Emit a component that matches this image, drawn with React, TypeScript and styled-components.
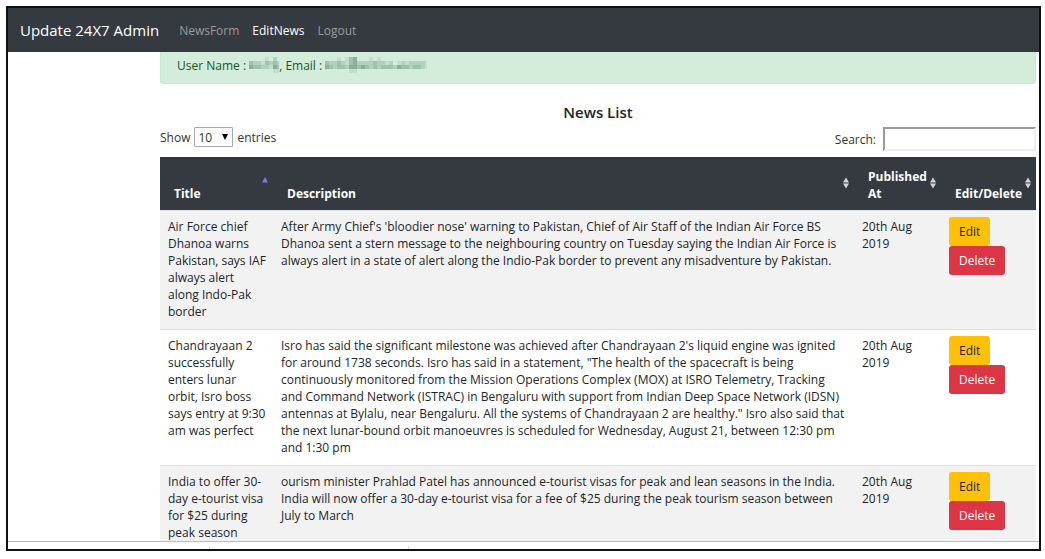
import React from 'react';
import styled, { createGlobalStyle, css } from 'styled-components';

const Global = createGlobalStyle`
  * { box-sizing: border-box; }
  body { margin: 0; background: #fff; color: #212529; font: 12px/17px "Open Sans", "Noto Sans", sans-serif; }
`;

const Frame = styled.div`
  display: flex; flex-direction: column;
  height: calc(100vh - 14px);
  margin: 6px 4px 8px 6px;
  border: 2px solid #111;
  background: #fff;
  overflow: hidden;
`;
const Navbar = styled.nav`
  display: flex; align-items: center; flex: none;
  height: 44px; padding: 0 12px; background: #343a40;
`;
const Brand = styled.a`
  margin-right: 20px; color: #fff; font-size: 15px; text-decoration: none; white-space: nowrap;
`;
const NavItem = styled.a<{ $active?: boolean }>`
  margin-right: 13px; text-decoration: none;
  color: ${p => (p.$active ? '#fff' : '#999c9f')};
`;
const Viewport = styled.main`
  flex: 1; min-height: 0; overflow: hidden; padding: 0 3px 0 152px;
`;
const Alert = styled.div`
  display: flex; height: 32px; padding: 5px 16px;
  color: #155724; background: #d4edda;
  border: 1px solid #c9e8d0; border-top: 0; border-radius: 0 0 3px 3px;
  white-space: pre;
`;
const Heading = styled.h1`
  margin: 18px 0 5px; font-size: 15px; line-height: 20px; font-weight: 600; text-align: center;
`;
const Controls = styled.div`
  display: flex; justify-content: space-between; align-items: flex-start;
  height: 30px; color: #333;
`;
const Control = styled.label`display: flex; align-items: center;`;
const Length = styled.select`
  width: 39px; height: 20px; margin: 0 4px; padding: 0 3px; appearance: none;
  border: 1px solid #a9a9a9; border-radius: 1px; color: #333; font: inherit; background: #fff;
`;
const SelectWrap = styled.span`position: relative; display: flex;
  svg { position: absolute; right: 9px; top: 7px; pointer-events: none; }
`;
const Search = styled.input`
  width: 153px; height: 24px; margin-left: 7px; padding: 1px; border: 2px inset #eee; font: inherit;
`;
const Table = styled.table`
  width: 100%; border-collapse: separate; border-spacing: 0; table-layout: fixed;
`;
const Th = styled.th`
  position: relative; height: 53px; padding: 9px 14px 8px; vertical-align: bottom; text-align: left;
  color: #fff; background: #343a40; font-weight: 700; white-space: pre;
  svg { position: absolute; right: 5px; top: 20px; }
`;
const Row = styled.tr<{ $odd: boolean }>`background: ${p => (p.$odd ? '#f2f2f2' : '#fff')};`;
const Td = styled.td<{ $actions?: boolean }>`
  padding: ${p => (p.$actions ? '6px' : '7px')} 8px 9px;
  border-top: 1px solid #dee2e6; vertical-align: top; white-space: pre;
`;
const Button = styled.button<{ $danger?: boolean }>`
  display: block; height: 29px; padding: 0 10px; border: 0; border-radius: 3px; font: inherit;
  ${p => p.$danger ? css`background: #dc3545; color: #fff;` : css`background: #ffc107; color: #212529;`}
`;
const StatusBar = styled.footer`
  display: flex; align-items: flex-end; flex: none; height: 8px;
  border-top: 1px solid #bbb; background: #fff;
`;
const Tab = styled.span<{ $w: number }>`width: ${p => p.$w}px; height: 3px; border-right: 1px solid #ddd;`;

const Sort = ({ up }: { up?: boolean }) => (
  <svg width="6" height="12" viewBox="0 0 6 12" aria-hidden="true">
    {up ? <path d="M0 5.5 3 0 6 5.5z" fill="#7a79dc" /> : <path d="M0 5.5 3 0.5 6 5.5zM0 6.5h6L3 11.5z" fill="#d3d4d5" />}
  </svg>
);

/* Each string is one row of cells; a higher digit is a darker cell. */
const levels = ['none', '#c3dfcb', '#b2d1bc', '#9fc2ab', '#8bb097'];
const Mosaic = ({ rows, width }: { rows: string[]; width: number }) => (
  <svg width={width} height="16" aria-hidden="true">
    {rows.flatMap((row, y) =>
      [...row].map((c, x) => (
        <rect key={`${x}-${y}`} x={x * 4} y={y * 4} width="4" height="4" fill={levels[Number(c)]} />
      )),
    )}
  </svg>
);

const news = [
  {
    title: 'Air Force chief\nDhanoa warns\nPakistan, says IAF\nalways alert\nalong Indo-Pak\nborder',
    text: "After Army Chief's 'bloodier nose' warning to Pakistan, Chief of Air Staff of the Indian Air Force BS\nDhanoa sent a stern message to the neighbouring country on Tuesday saying the Indian Air Force is\nalways alert in a state of alert along the Indio-Pak border to prevent any misadventure by Pakistan.",
  },
  {
    title: 'Chandrayaan 2\nsuccessfully\nenters lunar\norbit, Isro boss\nsays entry at 9:30\nam was perfect',
    text: 'Isro has said the significant milestone was achieved after Chandrayaan 2\'s liquid engine was ignited\nfor around 1738 seconds. Isro has said in a statement, "The health of the spacecraft is being\ncontinuously monitored from the Mission Operations Complex (MOX) at ISRO Telemetry, Tracking\nand Command Network (ISTRAC) in Bengaluru with support from Indian Deep Space Network (IDSN)\nantennas at Bylalu, near Bengaluru. All the systems of Chandrayaan 2 are healthy." Isro also said that\nthe next lunar-bound orbit manoeuvres is scheduled for Wednesday, August 21, between 12:30 pm\nand 1:30 pm',
  },
  {
    title: 'India to offer 30-\nday e-tourist visa\nfor $25 during\npeak season',
    text: 'ourism minister Prahlad Patel has announced e-tourist visas for peak and lean seasons in the India.\nIndia will now offer a 30-day e-tourist visa for a fee of $25 during the peak tourism season between\nJuly to March',
  },
];

export default function App() {
  return (
    <>
      <Global />
      <Frame>
        <Navbar>
          <Brand href="#">Update 24X7 Admin</Brand>
          <NavItem href="#form">NewsForm</NavItem>
          <NavItem href="#edit" $active>EditNews</NavItem>
          <NavItem href="#logout">Logout</NavItem>
        </Navbar>
        <Viewport>
          <Alert>
            {'User Name : '}
            <Mosaic width={30} rows={['00001020', '32213232', '43322143', '00000011']} />
            {', Email : '}
            <Mosaic width={102} rows={[
              '00010134000101000000000000',
              '32232134222232212012122221',
              '43233244343232333243323321',
              '00000011000000000000000000',
            ]} />
          </Alert>
          <Heading>News List</Heading>
          <Controls>
            <Control>
              Show
              <SelectWrap>
                <Length defaultValue="10"><option>10</option><option>25</option></Length>
                <svg width="6" height="6" viewBox="0 0 6 6"><path d="M0 0h6L3 6z" /></svg>
              </SelectWrap>
              entries
            </Control>
            <Control>Search:<Search type="search" /></Control>
          </Controls>
          <Table>
            <colgroup>
              <col style={{ width: '113px' }} /><col /><col style={{ width: '87px' }} /><col style={{ width: '95px' }} />
            </colgroup>
            <thead>
              <tr>
                <Th>Title<Sort up /></Th>
                <Th>Description<Sort /></Th>
                <Th>{'Published\nAt'}<Sort /></Th>
                <Th>Edit/Delete<Sort /></Th>
              </tr>
            </thead>
            <tbody>
              {news.map((n, i) => (
                <Row key={i} $odd={i % 2 === 0}>
                  <Td>{n.title}</Td>
                  <Td>{n.text}</Td>
                  <Td>{'20th Aug\n2019'}</Td>
                  <Td $actions><Button>Edit</Button><Button $danger>Delete</Button></Td>
                </Row>
              ))}
            </tbody>
          </Table>
        </Viewport>
        <StatusBar><Tab $w={202} /><Tab $w={199} /></StatusBar>
      </Frame>
    </>
  );
}
